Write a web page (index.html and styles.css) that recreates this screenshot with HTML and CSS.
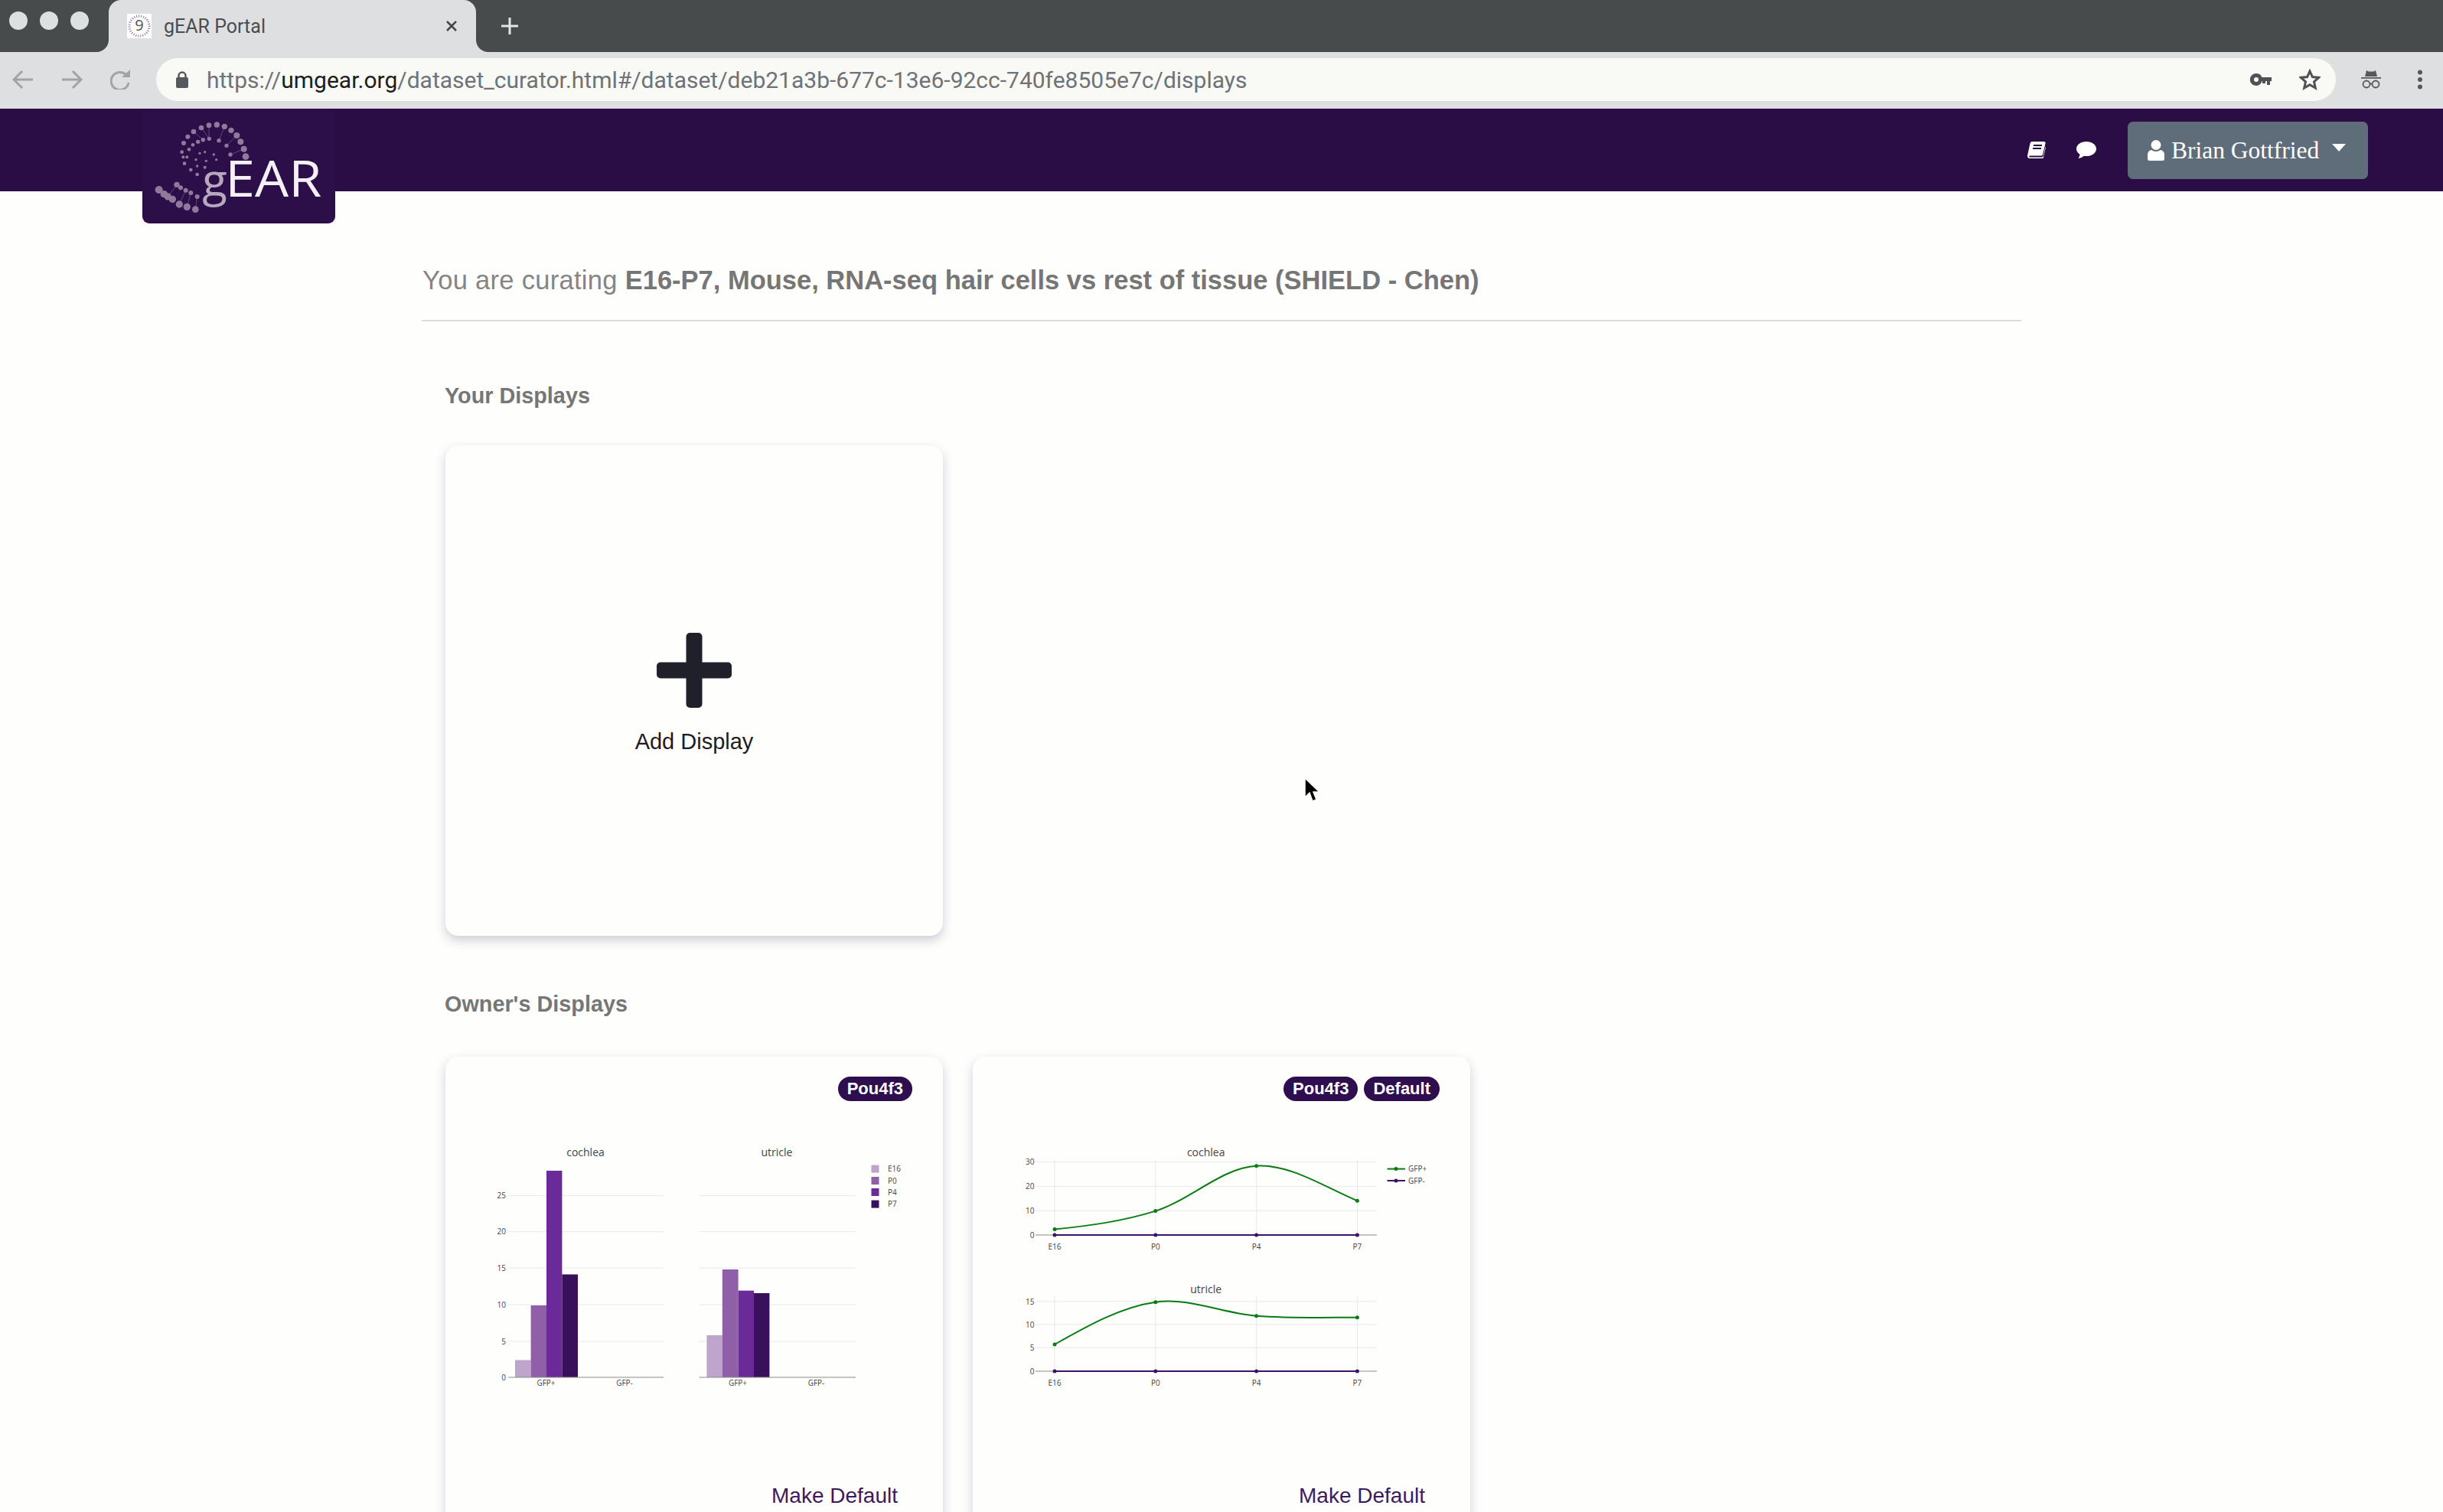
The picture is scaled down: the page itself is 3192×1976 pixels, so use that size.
FILE: index.html
```html
<!DOCTYPE html>
<html lang="en">
<head>
<meta charset="utf-8">
<title>gEAR Portal</title>
<link rel="stylesheet" href="styles.css">
</head>
<body>
<header class="chrome">
  <div class="tabstrip">
    <div class="lights"><span class="light"></span><span class="light"></span><span class="light"></span></div>
    <div class="tab">
      <svg class="favicon" viewBox="0 0 32 32"><rect width="32" height="32" fill="#fff"/><circle cx="16" cy="16" r="13" fill="none" stroke="#8a6fa5" stroke-width="3" stroke-dasharray="1 2"/><text x="16" y="22" class="favtext">9</text></svg>
      <span class="tabtitle">gEAR Portal</span>
      <svg class="tabclose" viewBox="0 0 14 14"><path d="M1 1l12 12M13 1L1 13"/></svg>
    </div>
    <svg class="newtab" viewBox="0 0 22 22"><path d="M11 0v22M0 11h22"/></svg>
  </div>
  <div class="toolbar">
    <div class="navbtns">
      <svg class="navbtn" viewBox="0 0 28 26"><path d="M27 13H3M13 2L2 13l11 11"/></svg>
      <svg class="navbtn" viewBox="0 0 28 26"><path d="M1 13h24M15 2l11 11-11 11"/></svg>
      <svg class="navbtn" viewBox="0 0 28 26"><path d="M21 7A11.5 11.5 0 1 0 24 17"/><path class="solid" d="M15 10h11V0z"/></svg>
    </div>
    <div class="omnibox">
      <svg class="lock" viewBox="0 0 16 22"><path class="ring" d="M3.5 10V6a4.5 4.5 0 0 1 9 0v4"/><rect y="8" width="16" height="14" rx="2"/></svg>
      <span class="url"><span class="urlpart">https://</span>umgear.org<span class="urlpart">/dataset_curator.html#/dataset/deb21a3b-677c-13e6-92cc-740fe8505e7c/displays</span></span>
      <svg class="key" viewBox="0 0 28 16"><path d="M8 0a8 8 0 0 1 7.5 5H28v5h-2v5h-4v-5h-2v3h-4v-3h-.5A8 8 0 1 1 8 0zm0 5a3 3 0 1 0 0 6 3 3 0 0 0 0-6z" fill-rule="evenodd"/></svg>
      <svg class="star" viewBox="0 0 28 28"><path d="M14 3l3.4 7.6 8.3.8-6.2 5.5 1.8 8.1L14 20.8l-7.3 4.2 1.8-8.1-6.2-5.5 8.3-.8z"/></svg>
    </div>
    <svg class="incognito" viewBox="0 0 26 24"><path class="solid" d="M7 0l3 1.500h6L19 0l2 8H5zM0 9h26v1.800H0z"/><circle cx="7" cy="18" r="4.500"/><circle cx="19" cy="18" r="4.500"/><path d="M11.500 17.500h3"/></svg>
    <svg class="kebab" viewBox="0 0 8 26"><circle cx="4" cy="3.500" r="3"/><circle cx="4" cy="13" r="3"/><circle cx="4" cy="22.500" r="3"/></svg>
  </div>
</header>

<nav class="sitebar">
  <svg class="logo" viewBox="0 0 756 450">
    <g class="spiral-lines">
      <path d="M370 105L330 145M322 70L300 125M261 65V118M201 90L238 122M398 158L345 180M231 75L262 118"/>
      <path d="M100 345L135 298M145 375L170 320M175 385L190 330M208 395L215 345"/>
    </g>
    <g class="dots-lg">
      <circle cx="405" cy="188" r="13"/><circle cx="398" cy="158" r="12"/><circle cx="385" cy="130" r="12"/><circle cx="370" cy="105" r="12"/><circle cx="348" cy="85" r="11"/><circle cx="322" cy="70" r="11"/><circle cx="292" cy="63" r="11"/><circle cx="261" cy="65" r="10"/><circle cx="231" cy="75" r="10"/><circle cx="201" cy="90" r="10"/><circle cx="178" cy="110" r="9"/><circle cx="162" cy="135" r="9"/>
      <circle cx="65" cy="318" r="15"/><circle cx="85" cy="335" r="14"/><circle cx="100" cy="345" r="14"/><circle cx="118" cy="355" r="14"/><circle cx="145" cy="375" r="14"/><circle cx="175" cy="385" r="14"/><circle cx="208" cy="395" r="13"/><circle cx="135" cy="298" r="11"/><circle cx="150" cy="310" r="9"/><circle cx="170" cy="320" r="9"/><circle cx="190" cy="330" r="9"/><circle cx="215" cy="345" r="9"/>
    </g>
    <g class="dots-sm">
      <circle cx="345" cy="180" r="8"/><circle cx="330" cy="145" r="8"/><circle cx="300" cy="125" r="8"/><circle cx="262" cy="118" r="8"/><circle cx="238" cy="122" r="8"/><circle cx="218" cy="130" r="8"/><circle cx="198" cy="142" r="7"/><circle cx="183" cy="160" r="7"/><circle cx="155" cy="170" r="7"/><circle cx="160" cy="190" r="6"/><circle cx="165" cy="215" r="7"/><circle cx="190" cy="240" r="7"/><circle cx="215" cy="258" r="7"/><circle cx="175" cy="190" r="6"/>
      <circle cx="290" cy="200" r="5"/><circle cx="280" cy="180" r="5"/><circle cx="245" cy="170" r="5"/><circle cx="225" cy="175" r="5"/><circle cx="210" cy="200" r="5"/><circle cx="215" cy="225" r="5"/><circle cx="245" cy="230" r="6"/><circle cx="250" cy="205" r="5"/>
    </g>
    <text x="235" y="345" class="logo-g">g</text>
    <text x="325" y="345" class="logo-ear" textLength="378" lengthAdjust="spacingAndGlyphs">EAR</text>
  </svg>
  <svg class="bookicon" viewBox="0 0 24 22"><path class="book" d="M6 0h15.500c1.500 0 2.500 1 2 2.500L20 17c-.4 1-1 1.500-2 1.500H3.500c-1.800 0-1.800 2 0 2H19c.8 0 1.400-.5 1.700-1.200L23.400 7l.6.400-3 13c-.2.900-1 1.600-2 1.600H3C1 22 0 20.500 0 19c0-.7.100-1.300.3-2L3.500 2.500C3.900 1 5 0 6 0z"/><path class="book-line" d="M8 5h11M7 9h11"/></svg>
  <svg class="chaticon" viewBox="0 0 26 22"><path d="M13 0C6 0 0 4 0 9.500c0 3 1.800 5.500 4.500 7.200C4.300 18.500 3.500 20.500 2.500 22c3-.3 6-1.800 7.500-3.200 1 .2 2 .3 3 .3 7 0 13-4 13-9.600S20 0 13 0z"/></svg>
  <button class="userbtn" type="button">
    <svg class="usericon" viewBox="0 0 22 27"><circle cx="11" cy="6.500" r="6.500"/><path d="M5 13c3.500 2.500 8.500 2.500 12 0 3 .6 5 3 5 6v5.500a2.500 2.500 0 0 1-2.500 2.500h-17A2.500 2.500 0 0 1 0 24.500V19c0-3 2-5.400 5-6z"/></svg>
    <span class="username">Brian Gottfried</span>
    <span class="caret"></span>
  </button>
</nav>

<main class="content">
  <h1 class="curating"><span class="curating-lead">You are curating </span><strong>E16-P7, Mouse, RNA-seq hair cells vs rest of tissue (SHIELD - Chen)</strong></h1>
  <section class="group group-own">
    <h2 class="group-title">Your Displays</h2>
    <div class="cards">
      <article class="card card-add">
        <svg class="addplus" viewBox="0 0 98 98"><path d="M38.500 5a5 5 0 0 1 5-5h11a5 5 0 0 1 5 5v33.500H93a5 5 0 0 1 5 5v11a5 5 0 0 1-5 5H59.500V93a5 5 0 0 1-5 5h-11a5 5 0 0 1-5-5V59.500H5a5 5 0 0 1-5-5v-11a5 5 0 0 1 5-5h33.500z"/></svg>
        <p class="addlabel">Add Display</p>
      </article>
    </div>
  </section>
  <section class="group group-owner">
    <h2 class="group-title">Owner's Displays</h2>
    <div class="cards">
      <article class="card">
        <div class="badges"><span class="badge">Pou4f3</span></div>
        <svg class="chart" viewBox="582 1440 650 480">
          <path class="grid" d="M664 1561.600H867M664 1608.700H867M664 1656H867M664 1704H867M664 1752H867M913.400 1561.600H1118M913.400 1608.700H1118M913.400 1656H1118M913.400 1704H1118M913.400 1752H1118"/>
          <rect class="c-e16" x="673" y="1776.500" width="20.600" height="22.500"/>
          <rect class="c-p0" x="693.600" y="1705" width="20.400" height="94"/>
          <rect class="c-p4" x="714" y="1529" width="20.400" height="270"/>
          <rect class="c-p7" x="734.400" y="1664.500" width="20.600" height="134.500"/>
          <rect class="c-e16" x="923.400" y="1744" width="20.400" height="55"/>
          <rect class="c-p0" x="943.800" y="1658" width="20.800" height="141"/>
          <rect class="c-p4" x="964.600" y="1685.700" width="20.400" height="113.300"/>
          <rect class="c-p7" x="985" y="1689" width="20.400" height="110"/>
          <path class="axis" d="M664 1799H867M913.400 1799H1118"/>
          <text class="ctitle" x="765" y="1510">cochlea</text>
          <text class="ctitle" x="1015" y="1510">utricle</text>
          <text class="tick-y" x="661" y="1565">25</text><text class="tick-y" x="661" y="1612">20</text><text class="tick-y" x="661" y="1659.500">15</text><text class="tick-y" x="661" y="1707.500">10</text><text class="tick-y" x="661" y="1755.500">5</text><text class="tick-y" x="661" y="1802.500">0</text>
          <text class="tick-x" x="713.500" y="1810">GFP+</text><text class="tick-x" x="816" y="1810">GFP-</text><text class="tick-x" x="964" y="1810">GFP+</text><text class="tick-x" x="1066.500" y="1810">GFP-</text>
          <rect class="c-e16" x="1138.500" y="1521.600" width="10" height="10"/><rect class="c-p0" x="1138.500" y="1537" width="10" height="10"/><rect class="c-p4" x="1138.500" y="1552" width="10" height="10"/><rect class="c-p7" x="1138.500" y="1567.600" width="10" height="10"/>
          <text class="legend" x="1160" y="1530">E16</text><text class="legend" x="1160" y="1545.500">P0</text><text class="legend" x="1160" y="1560.500">P4</text><text class="legend" x="1160" y="1576">P7</text>
        </svg>
        <a class="makedefault">Make Default</a>
      </article>
      <article class="card">
        <div class="badges"><span class="badge">Pou4f3</span><span class="badge">Default</span></div>
        <svg class="chart" viewBox="1271 1440 650 480">
          <path class="grid" d="M1353 1517.600H1799M1353 1549.400H1799M1353 1581.200H1799M1378 1515V1613M1509.800 1515V1613M1641.600 1515V1613M1773.400 1515V1613"/>
          <path class="grid" d="M1353 1699.900H1799M1353 1730H1799M1353 1760.400H1799M1378 1693V1791M1509.800 1693V1791M1641.600 1693V1791M1773.400 1693V1791"/>
          <path class="axis" d="M1353 1613H1799M1353 1791H1799"/>
          <path class="line-pos" d="M1378 1605.600C1422 1601 1465 1595.600 1509.800 1581.600C1554.600 1567.600 1596.800 1525 1641.600 1522.700C1686.400 1520.400 1730 1550 1773.400 1568.300"/>
          <path class="line-neg" d="M1378 1613H1773.400"/>
          <path class="line-pos" d="M1378 1756C1422 1731 1465 1707 1509.800 1700.700C1554.600 1694.400 1597 1715.300 1641.600 1718.700C1686 1722 1730 1720.700 1773.400 1720.700"/>
          <path class="line-neg" d="M1378 1791H1773.400"/>
          <g class="pts-pos"><circle cx="1378" cy="1605.600" r="2.500"/><circle cx="1509.800" cy="1581.600" r="2.500"/><circle cx="1641.600" cy="1522.700" r="2.500"/><circle cx="1773.400" cy="1568.300" r="2.500"/><circle cx="1378" cy="1756" r="2.500"/><circle cx="1509.800" cy="1700.700" r="2.500"/><circle cx="1641.600" cy="1718.700" r="2.500"/><circle cx="1773.400" cy="1720.700" r="2.500"/><circle cx="1824" cy="1526.600" r="2.500"/></g>
          <g class="pts-neg"><circle cx="1378" cy="1613" r="2.500"/><circle cx="1509.800" cy="1613" r="2.500"/><circle cx="1641.600" cy="1613" r="2.500"/><circle cx="1773.400" cy="1613" r="2.500"/><circle cx="1378" cy="1791" r="2.500"/><circle cx="1509.800" cy="1791" r="2.500"/><circle cx="1641.600" cy="1791" r="2.500"/><circle cx="1773.400" cy="1791" r="2.500"/><circle cx="1824" cy="1542" r="2.500"/></g>
          <path class="line-pos" d="M1812.500 1526.600H1836"/><path class="line-neg" d="M1812.500 1542H1836"/>
          <text class="ctitle" x="1575.700" y="1510">cochlea</text>
          <text class="ctitle" x="1575.700" y="1688.500">utricle</text>
          <text class="tick-y" x="1351.500" y="1521">30</text><text class="tick-y" x="1351.500" y="1553">20</text><text class="tick-y" x="1351.500" y="1584.500">10</text><text class="tick-y" x="1351.500" y="1616.500">0</text>
          <text class="tick-y" x="1351.500" y="1703.500">15</text><text class="tick-y" x="1351.500" y="1733.500">10</text><text class="tick-y" x="1351.500" y="1764">5</text><text class="tick-y" x="1351.500" y="1794.500">0</text>
          <text class="tick-x" x="1378" y="1632">E16</text><text class="tick-x" x="1509.800" y="1632">P0</text><text class="tick-x" x="1641.600" y="1632">P4</text><text class="tick-x" x="1773.400" y="1632">P7</text>
          <text class="tick-x" x="1378" y="1810">E16</text><text class="tick-x" x="1509.800" y="1810">P0</text><text class="tick-x" x="1641.600" y="1810">P4</text><text class="tick-x" x="1773.400" y="1810">P7</text>
          <text class="legend" x="1840" y="1530">GFP+</text><text class="legend" x="1840" y="1545.500">GFP-</text>
        </svg>
        <a class="makedefault">Make Default</a>
      </article>
    </div>
  </section>
</main>
<svg class="cursor" viewBox="0 0 24 34"><path d="M1 1v25l6-6 4 11 5-2-4-10h8z"/></svg>
</body>
</html>
```
FILE: styles.css
```css
* { box-sizing: border-box; }
html, body { margin: 0; padding: 0; height: 100%; overflow: hidden; }
body { position: relative; background: #fefefd; font-family: "Liberation Sans", Arial, sans-serif; color: #1d1d26; }
h1, h2, p { margin: 0; font-weight: normal; }

/* browser chrome */
.chrome { background: #dedfe1; }
.tabstrip { display: flex; align-items: center; height: 68px; background: #484b4c; }
.lights { display: flex; gap: 16px; margin: 0 26px 14px 12px; }
.light { width: 24px; height: 24px; border-radius: 50%; background: #dedfe1; }
.tab { position: relative; display: flex; align-items: center; align-self: stretch; width: 480px; padding: 0 25px 0 24px; background: #dedfe1; border-radius: 16px 16px 0 0; }
.tab::before, .tab::after { content: ""; position: absolute; bottom: 0; width: 16px; height: 16px; background: #484b4c; }
.tab::before { left: -16px; border-bottom-right-radius: 16px; box-shadow: 8px 8px 0 8px #dedfe1; clip-path: inset(0); }
.tab::after { right: -16px; border-bottom-left-radius: 16px; box-shadow: -8px 8px 0 8px #dedfe1; clip-path: inset(0); }
.favicon { width: 32px; height: 32px; }
.favtext { font-family: "Open Sans", sans-serif; font-size: 20px; fill: #555; text-anchor: middle; }
.tabtitle { margin-left: 16px; font-family: Roboto, sans-serif; font-size: 25px; color: #4a4d50; }
.tabclose { width: 14px; height: 14px; margin-left: auto; fill: none; stroke: #45484a; stroke-width: 2.500; }
.newtab { width: 22px; height: 22px; margin-left: 33px; fill: none; stroke: #e4e4e6; stroke-width: 3; }

.toolbar { display: flex; align-items: center; height: 74px; padding: 0 26px 2px 16px; background: #dedfe1; }
.navbtns { display: flex; gap: 36px; }
.navbtn { width: 28px; height: 26px; fill: none; stroke: #a2a3a5; stroke-width: 3; }
.navbtn .solid { fill: #a2a3a5; stroke: none; }
.omnibox { flex: 1; display: flex; align-items: center; height: 56px; margin-left: 32px; padding: 0 20px 0 26px; background: #f9f9f6; border-radius: 28px; }
.lock { width: 16px; height: 22px; fill: #55585c; }
.lock .ring { fill: none; stroke: #55585c; stroke-width: 2.500; }
.url { margin-left: 24px; font-family: Roboto, sans-serif; font-size: 30px; color: #1c1d20; white-space: nowrap; }
.urlpart { color: #6f7276; }
.key { width: 28px; height: 16px; margin-left: auto; fill: #4e5156; }
.star { width: 28px; height: 28px; margin-left: 36px; fill: none; stroke: #4e5156; stroke-width: 3; }
.incognito { width: 26px; height: 24px; margin-left: 33px; fill: none; stroke: #55585c; stroke-width: 1.800; }
.incognito .solid { fill: #55585c; stroke: none; }
.kebab { width: 8px; height: 26px; margin-left: 47px; fill: #55585c; }

/* site navbar */
.sitebar { position: relative; display: flex; align-items: center; justify-content: flex-end; height: 108px; padding-right: 98px; background: #2a0d44; }
.logo { position: absolute; left: 186px; top: 0; width: 252px; height: 150px; background: #2c0f48; border-radius: 0 0 9px 9px; }
.spiral-lines { fill: none; stroke: #6b5080; stroke-width: 2.500; }
.dots-lg, .dots-sm { fill: #8f7a9c; }
.logo-g { font-family: "Open Sans", sans-serif; font-size: 180px; fill: #b7a8c0; }
.logo-ear { font-family: "Open Sans", sans-serif; font-size: 198px; fill: #f4f0f6; }
.bookicon { width: 24px; height: 22px; fill: #fff; }
.book-line { fill: none; stroke: #2a0d44; stroke-width: 2.200; }
.chaticon { width: 26px; height: 22px; margin-left: 40px; fill: #fff; }
.userbtn { display: flex; align-items: center; width: 314px; height: 75px; margin-left: 41px; padding: 0 0 0 26px; border: 0; border-radius: 7px; background: #5f6d7b; color: #fff; }
.usericon { width: 22px; height: 27px; fill: #fff; }
.username { margin: 2px 0 0 9px; font-family: "Liberation Serif", serif; font-size: 31.500px; }
.caret { width: 0; height: 0; margin: 0 0 6px 17px; border-style: solid; border-width: 10px 9.500px 0; border-color: #fff transparent transparent; }

/* page */
.content { width: 2090px; margin: 0 auto; padding-top: 92px; }
.curating { height: 78px; padding: 0 0 28px 1px; border-bottom: 2px solid #dddbd8; font-size: 34.500px; line-height: 48px; color: #767676; white-space: nowrap; }
.curating-lead { letter-spacing: .3px; color: #858585; }
.curating strong { font-weight: bold; }
.group { padding-left: 30px; }
.group-own { margin-top: 77px; }
.group-owner { margin-top: 69px; }
.group-title { height: 40px; font-size: 28.800px; font-weight: bold; line-height: 40px; color: #767676; }
.group-own .cards { margin-top: 45px; }
.group-owner .cards { margin-top: 49px; }
.cards { display: flex; gap: 39px; padding-left: 1px; }
.card { flex: none; width: 650px; height: 641px; border-radius: 17px; background: #fefefd; box-shadow: 0 6px 14px rgba(60, 50, 90, .24); }
.card-add { display: flex; flex-direction: column; align-items: center; padding-top: 245px; }
.addplus { width: 98px; height: 98px; fill: #1f2029; }
.addlabel { margin-top: 26px; font-size: 29px; line-height: 36px; color: #1c1c22; }
.badges { display: flex; justify-content: flex-end; gap: 8px; padding: 26px 40px 0 0; }
.badge { height: 32px; padding: 0 12px; border-radius: 16px; background: #2f0e50; color: #fff; font-size: 22px; font-weight: bold; line-height: 32px; }
.chart { display: block; width: 650px; height: 480px; margin-top: 2px; }
.makedefault { display: block; margin-top: 14px; padding-right: 59px; font-size: 28px; line-height: 40px; text-align: right; color: #3d1a60; }

/* plotly-style charts */
.grid { fill: none; stroke: #e8e8ee; stroke-width: 1; }
.axis { fill: none; stroke: #8a8a8a; stroke-width: 1.200; }
.ctitle, .tick-x, .tick-y, .legend { font-family: "Open Sans", sans-serif; fill: #444; }
.ctitle { font-size: 14px; text-anchor: middle; }
.tick-x { font-size: 10px; text-anchor: middle; }
.tick-y { font-size: 10px; text-anchor: end; }
.legend { font-size: 10px; }
.c-e16 { fill: #bfa4cc; }
.c-p0 { fill: #8f60a8; }
.c-p4 { fill: #6a2a98; }
.c-p7 { fill: #38105c; }
.line-pos { fill: none; stroke: #0a7d12; stroke-width: 2; }
.line-neg { fill: none; stroke: #3a1468; stroke-width: 2; }
.pts-pos { fill: #0a7d12; }
.pts-neg { fill: #3a1468; }

.cursor { position: absolute; left: 1704px; top: 1016px; width: 24px; height: 34px; fill: #000; stroke: #fff; stroke-width: 1.500; }
```
